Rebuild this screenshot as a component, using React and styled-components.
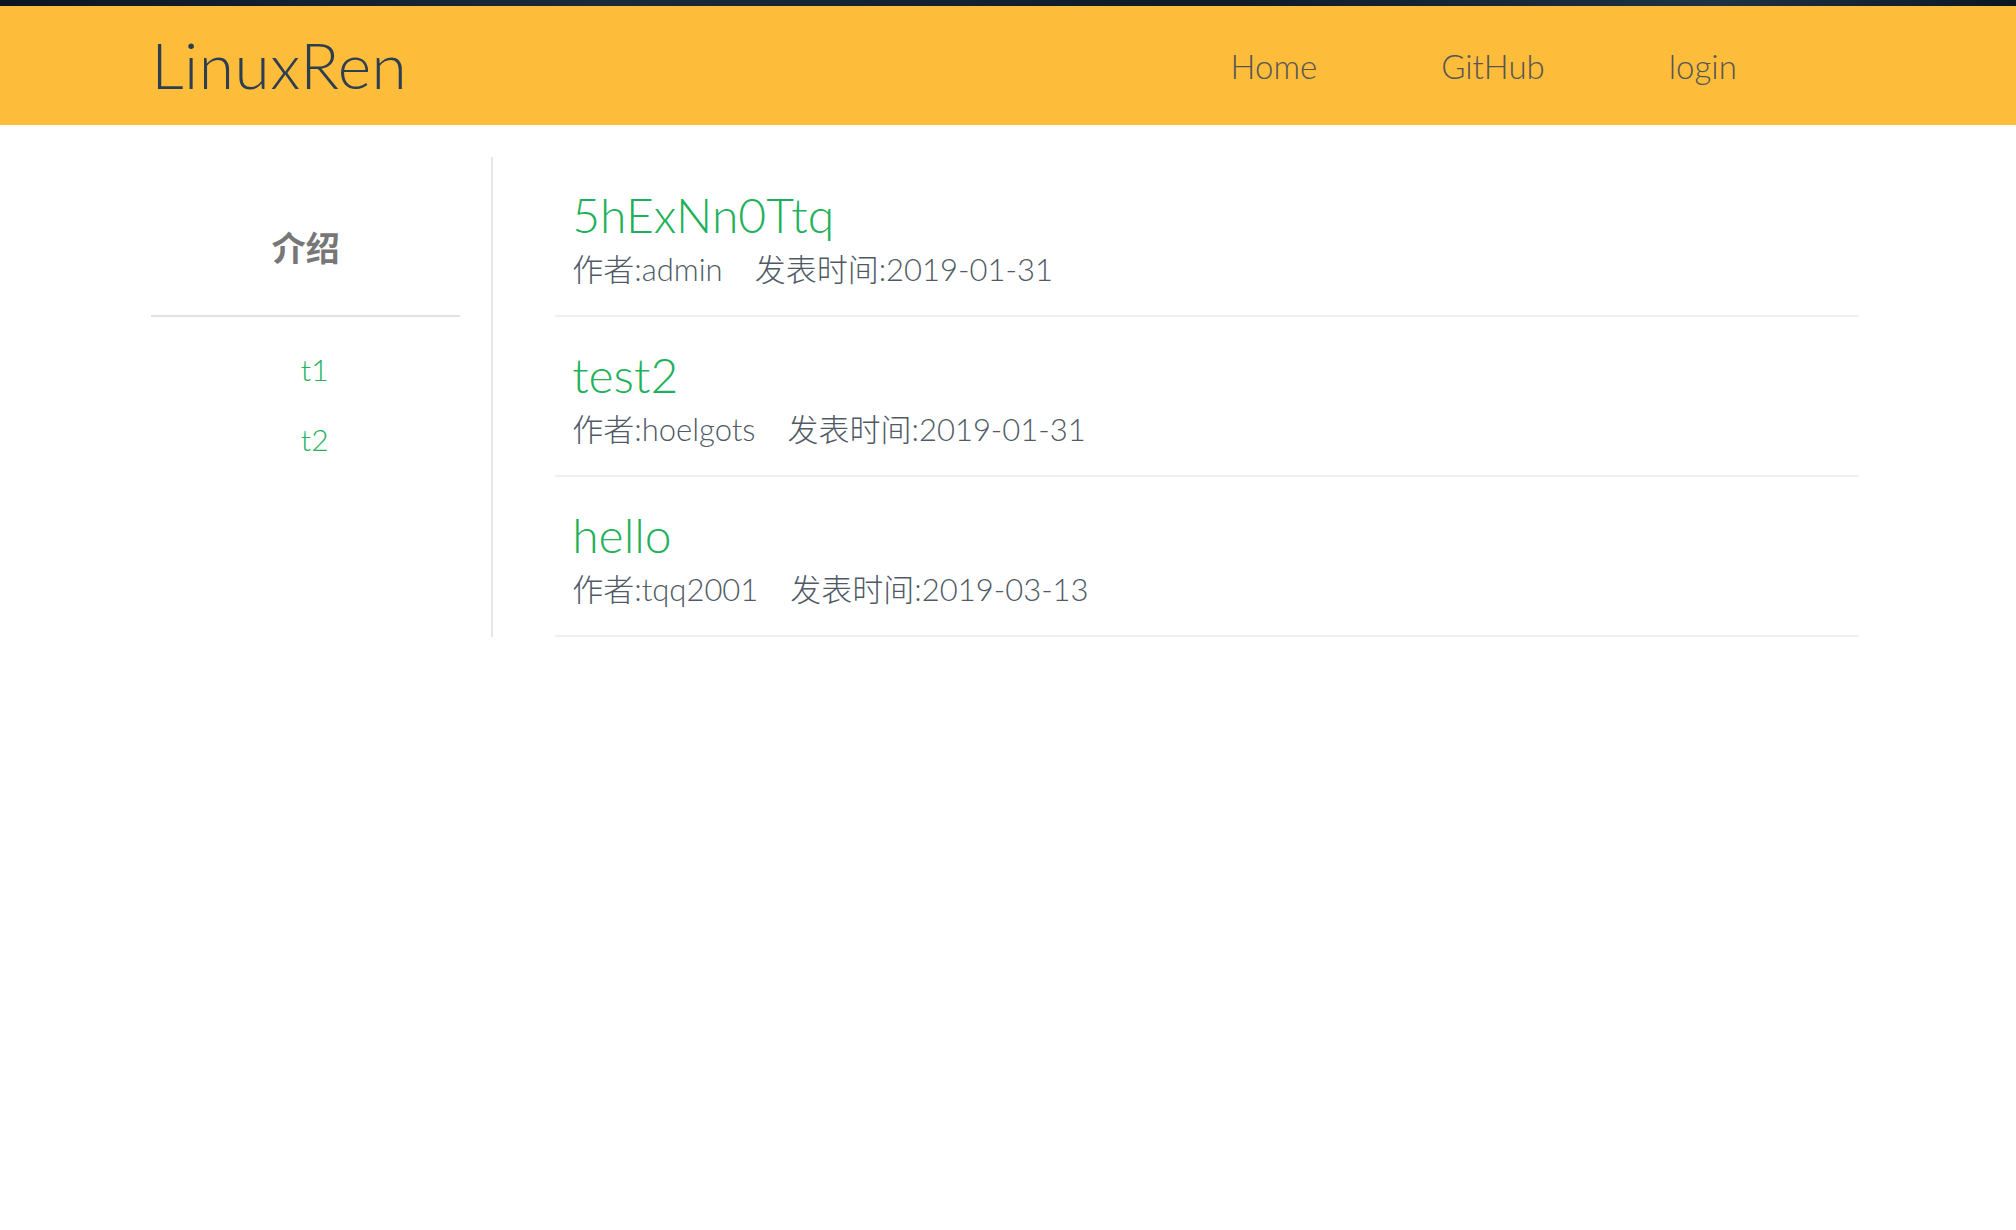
import styled, { createGlobalStyle } from "styled-components";

const GlobalStyle = createGlobalStyle`
    html, body {
        margin: 0;
        padding: 0;
        background: #ffffff;
    }

    body {
        font-family: Lato, "Noto Sans CJK SC", sans-serif;
    }
`;

const TopStrip = styled.div`
    height: 6px;
    width: 100%;
    background: linear-gradient(90deg, #0c1622 0%, #1b2b3a 30%, #0e1a26 60%, #203243 85%, #0c1622 100%);
`;

const Header = styled.header`
    height: 119px;
    width: 100%;
    background: #febc3b;
`;

const HeaderInner = styled.div`
    height: 100%;
    width: 85%;
    margin: 0 auto;
    display: flex;
    align-items: center;
    justify-content: space-between;
`;

const Logo = styled.div`
    font-family: Lato, sans-serif;
    font-weight: 300;
    font-size: 64px;
    color: #2c3e50;
    letter-spacing: 0.5px;
    margin-top: -2px;
`;

const Nav = styled.nav`
    display: flex;
    align-items: center;
    column-gap: 124px;
    margin-right: 128px;
`;

const NavLink = styled.a`
    font-family: Lato, sans-serif;
    font-weight: 300;
    font-size: 33px;
    color: #555555;
    text-decoration: none;
`;

const Page = styled.div`
    width: 85%;
    margin: 32px auto 0;
    display: flex;
    align-items: stretch;
`;

const Sidebar = styled.aside`
    width: 309px;
    padding-right: 31px;
    border-right: 2px solid #e6e6e6;
    display: flex;
    flex-direction: column;
    align-items: center;
`;

const SidebarTitle = styled.h3`
    width: 100%;
    margin: 0;
    padding: 70px 0 48px;
    text-align: center;
    font-family: "Noto Sans CJK SC", sans-serif;
    font-size: 34px;
    font-weight: 700;
    line-height: 40px;
    color: #777777;
    border-bottom: 2px solid #e2e2e2;
`;

const TagList = styled.div`
    padding-top: 34px;
    padding-left: 18px;
    display: flex;
    flex-direction: column;
    align-items: center;
    row-gap: 34px;
`;

const Tag = styled.a`
    font-family: Lato, sans-serif;
    font-weight: 300;
    font-size: 30px;
    line-height: 36px;
    color: #21b25c;
    text-decoration: none;
`;

const PostList = styled.main`
    flex: 1;
    margin-left: 62px;
    margin-right: 6px;
`;

const PostItem = styled.div`
    height: 160px;
    padding: 6px 17px 0;
    box-sizing: border-box;
    border-bottom: 2px solid #f0f0f0;
    display: flex;
    flex-direction: column;
    justify-content: center;
`;

const PostTitle = styled.a`
    font-family: Lato, sans-serif;
    font-weight: 300;
    font-size: 48px;
    line-height: 56px;
    color: #1fb15a;
    text-decoration: none;
`;

const PostMeta = styled.div`
    font-family: Lato, "Noto Sans CJK SC", sans-serif;
    font-weight: 300;
    font-size: 31px;
    line-height: 44px;
    color: #4f5a66;
    margin-top: 4px;

    && span + span {
        margin-left: 32px;
    }
`;

const posts = [
    { title: "5hExNn0Ttq", author: "admin", date: "2019-01-31" },
    { title: "test2", author: "hoelgots", date: "2019-01-31" },
    { title: "hello", author: "tqq2001", date: "2019-03-13" }
];

const App = () => {
    return (
        <>
            <GlobalStyle />
            <TopStrip />
            <Header>
                <HeaderInner>
                    <Logo>LinuxRen</Logo>
                    <Nav>
                        <NavLink href="#">Home</NavLink>
                        <NavLink href="#">GitHub</NavLink>
                        <NavLink href="#">login</NavLink>
                    </Nav>
                </HeaderInner>
            </Header>
            <Page>
                <Sidebar>
                    <SidebarTitle>介绍</SidebarTitle>
                    <TagList>
                        <Tag href="#">t1</Tag>
                        <Tag href="#">t2</Tag>
                    </TagList>
                </Sidebar>
                <PostList>
                    {posts.map(post => (
                        <PostItem key={post.title}>
                            <PostTitle href="#">{post.title}</PostTitle>
                            <PostMeta>
                                <span>作者:{post.author}</span>
                                <span>发表时间:{post.date}</span>
                            </PostMeta>
                        </PostItem>
                    ))}
                </PostList>
            </Page>
        </>
    );
}

export default App;
